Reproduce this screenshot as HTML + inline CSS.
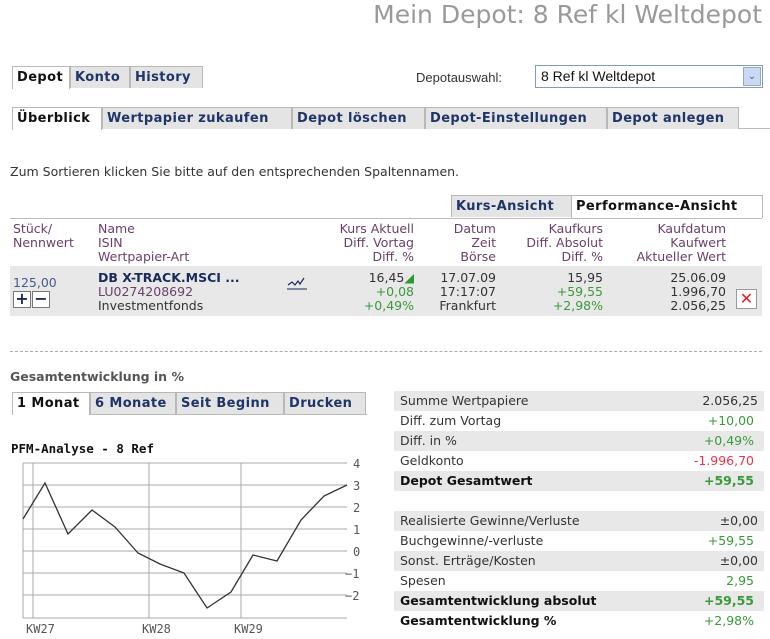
<!DOCTYPE html>
<html><head><meta charset="utf-8"><style>
*{margin:0;padding:0;box-sizing:border-box}
body{width:770px;height:639px;background:#fff;font-family:"DejaVu Sans","Liberation Sans",sans-serif;font-size:12px;color:#333;position:relative;overflow:hidden}
.a{position:absolute;white-space:nowrap}
.tab{position:absolute;height:22px;border:1px solid #b8b8b8;border-bottom:none;background:#e4e4e4;font-weight:bold;color:#1f3568;font-size:13px;line-height:21px;text-align:left;padding-left:4px;overflow:hidden;white-space:nowrap;letter-spacing:0.4px}
.tab.on{background:#fff;color:#111;height:23px}
.line{position:absolute;height:1px;background:#bbb}
.p{color:#6a3f6a}
.g{color:#3a9a3a}
.r{text-align:right}
.row{position:absolute;left:394px;width:370px;height:20px;line-height:20px;font-size:12.5px}
.row span{position:absolute;left:6px}
.row b,.row i{position:absolute;right:6px;font-style:normal}
.gr{background:#e8e8e8}
</style></head><body>
<div class="a" style="right:8px;top:0px;font-size:25px;color:#999">Mein Depot: 8 Ref kl Weltdepot</div>

<div class="line" style="left:12px;top:87px;width:190px"></div>
<div class="tab on" style="left:12px;top:66px;width:58px">Depot</div>
<div class="tab" style="left:70px;top:66px;width:60px">Konto</div>
<div class="tab" style="left:130px;top:66px;width:73px">History</div>
<div class="a" style="left:416px;top:70px;font-family:'Liberation Sans',sans-serif;font-size:13px;color:#333">Depotauswahl:</div>
<div class="a" style="left:535px;top:65px;width:228px;height:23px;border:1px solid #7f9db9;font-family:'Liberation Sans',sans-serif;font-size:14px;line-height:21px;padding-left:5px;color:#111">8 Ref kl Weltdepot
<div style="position:absolute;right:1px;top:1px;width:18px;height:19px;background:#c9d8f5;border:1px solid #9ab;color:#4d6185;font-size:10px;text-align:center;line-height:17px">&#8964;</div></div>

<div class="line" style="left:12px;top:128px;width:758px"></div>
<div class="tab on" style="left:12px;top:107px;width:90px">Überblick</div>
<div class="tab" style="left:102px;top:107px;width:190px">Wertpapier zukaufen</div>
<div class="tab" style="left:292px;top:107px;width:133px">Depot löschen</div>
<div class="tab" style="left:425px;top:107px;width:182px">Depot-Einstellungen</div>
<div class="tab" style="left:607px;top:107px;width:132px">Depot anlegen</div>

<div class="a" style="left:10px;top:164px;font-size:12.5px;color:#333">Zum Sortieren klicken Sie bitte auf den entsprechenden Spaltennamen.</div>

<div class="line" style="left:10px;top:218px;width:752px"></div>
<div class="tab" style="left:451px;top:195px;width:121px">Kurs-Ansicht</div>
<div class="tab on" style="left:571px;top:195px;width:192px">Performance-Ansicht</div>

<div class="a p" style="left:13px;top:222px;line-height:14px;font-size:12.5px">Stück/<br>Nennwert</div>
<div class="a p" style="left:98px;top:222px;line-height:14px;font-size:12.5px">Name<br>ISIN<br>Wertpapier-Art</div>
<div class="a p r" style="right:356px;top:222px;line-height:14px;font-size:12.5px">Kurs Aktuell<br>Diff. Vortag<br>Diff. %</div>
<div class="a p r" style="right:274px;top:222px;line-height:14px;font-size:12.5px">Datum<br>Zeit<br>Börse</div>
<div class="a p r" style="right:167px;top:222px;line-height:14px;font-size:12.5px">Kaufkurs<br>Diff. Absolut<br>Diff. %</div>
<div class="a p r" style="right:44px;top:222px;line-height:14px;font-size:12.5px">Kaufdatum<br>Kaufwert<br>Aktueller Wert</div>

<div class="a" style="left:10px;top:266px;width:752px;height:50px;background:#e8e8e8"></div>
<div class="a" style="left:13px;top:275px;font-size:12.5px;color:#4a5a8a">125,00</div>
<div class="a" style="left:13px;top:291px;width:18px;height:17px;border:1px solid #777;background:#fff;font-weight:bold;font-size:16px;line-height:14px;text-align:center;color:#1a2a5a">+</div>
<div class="a" style="left:32px;top:291px;width:18px;height:17px;border:1px solid #777;background:#fff;font-weight:bold;font-size:16px;line-height:14px;text-align:center;color:#1a2a5a">−</div>
<div class="a" style="left:98px;top:271px;line-height:14px;font-size:12.5px"><b style="color:#1a2a5a">DB X-TRACK.MSCI ...</b><br><span class="p">LU0274208692</span><br>Investmentfonds</div>
<svg class="a" style="left:286px;top:277px" width="22" height="14"><path d="M2 8 L6 5 L9 8 L12 4 L14 7 L18 1" fill="none" stroke="#1a2a5a" stroke-width="1.2"/><line x1="1" y1="12" x2="21" y2="12" stroke="#1a2a5a"/></svg>
<div class="a r" style="right:356px;top:271px;line-height:14px;font-size:12.5px">16,45<span style="color:#2a9a2a">&#9698;</span><br><span class="g">+0,08</span><br><span class="g">+0,49%</span></div>
<div class="a r" style="right:274px;top:271px;line-height:14px;font-size:12.5px">17.07.09<br>17:17:07<br>Frankfurt</div>
<div class="a r" style="right:167px;top:271px;line-height:14px;font-size:12.5px">15,95<br><span class="g">+59,55</span><br><span class="g">+2,98%</span></div>
<div class="a r" style="right:44px;top:271px;line-height:14px;font-size:12.5px">25.06.09<br>1.996,70<br>2.056,25</div>
<div class="a" style="left:736px;top:289px;width:21px;height:20px;border:1px solid #999;background:#fff;color:#e02020;font-size:16px;line-height:18px;text-align:center">✕</div>

<div class="a" style="left:10px;top:351px;width:752px;border-top:1px dashed #aaa"></div>

<div class="a" style="left:10px;top:369px;font-weight:bold;color:#555;font-size:12.5px">Gesamtentwicklung in %</div>
<div class="line" style="left:12px;top:414px;width:355px"></div>
<div class="tab on" style="left:12px;top:392px;width:78px">1 Monat</div>
<div class="tab" style="left:90px;top:392px;width:86px">6 Monate</div>
<div class="tab" style="left:176px;top:392px;width:108px">Seit Beginn</div>
<div class="tab" style="left:284px;top:392px;width:82px">Drucken</div>

<div class="a" style="left:11px;top:441px;font-family:'DejaVu Sans Mono','Liberation Mono',monospace;font-weight:bold;font-size:12.5px;color:#111">PFM-Analyse - 8 Ref</div>
<svg class="a" style="left:0;top:455px" width="380" height="184" font-family="DejaVu Sans Mono,monospace" font-size="12" fill="#555">
<g stroke="#aaa" stroke-width="1">
<line x1="23" y1="8" x2="347" y2="8"/><line x1="23" y1="30" x2="347" y2="30"/><line x1="23" y1="52" x2="347" y2="52"/><line x1="23" y1="74" x2="347" y2="74"/><line x1="23" y1="96" x2="347" y2="96"/><line x1="23" y1="118" x2="347" y2="118"/><line x1="23" y1="140" x2="347" y2="140"/><line x1="23" y1="163" x2="347" y2="163"/>
<line x1="23" y1="8" x2="23" y2="163"/><line x1="33" y1="8" x2="33" y2="163"/><line x1="149" y1="8" x2="149" y2="163"/><line x1="241" y1="8" x2="241" y2="163"/>
</g>
<polyline fill="none" stroke="#333" stroke-width="1.3" points="23,64 45,28 68,79 92,55 115,72 138,98 160,109 184,118 207,153 231,137 253,100 277,106 301,65 324,41 347,30"/>
<text x="353" y="13">4</text><text x="353" y="35">3</text><text x="353" y="57">2</text><text x="353" y="79">1</text><text x="353" y="101">0</text><text x="345" y="123">−1</text><text x="345" y="145">−2</text>
<text x="26" y="178">KW27</text><text x="142" y="178">KW28</text><text x="234" y="178">KW29</text>
</svg>

<div class="row gr" style="top:391px"><span>Summe Wertpapiere</span><i>2.056,25</i></div>
<div class="row" style="top:411px"><span>Diff. zum Vortag</span><i class="g" style="right:10px">+10,00</i></div>
<div class="row gr" style="top:431px"><span>Diff. in %</span><i class="g" style="right:10px">+0,49%</i></div>
<div class="row" style="top:451px"><span>Geldkonto</span><i style="right:10px;color:#f0304a">-1.996,70</i></div>
<div class="row gr" style="top:471px"><span style="font-weight:bold;color:#111">Depot Gesamtwert</span><b class="g" style="right:10px">+59,55</b></div>
<div class="row gr" style="top:511px"><span>Realisierte Gewinne/Verluste</span><i>±0,00</i></div>
<div class="row" style="top:531px"><span>Buchgewinne/-verluste</span><i class="g" style="right:10px">+59,55</i></div>
<div class="row gr" style="top:551px"><span>Sonst. Erträge/Kosten</span><i>±0,00</i></div>
<div class="row" style="top:571px"><span>Spesen</span><i class="g" style="right:10px">2,95</i></div>
<div class="row gr" style="top:591px"><span style="font-weight:bold;color:#111">Gesamtentwicklung absolut</span><b class="g" style="right:10px">+59,55</b></div>
<div class="row" style="top:611px"><span style="font-weight:bold;color:#111">Gesamtentwicklung %</span><i class="g" style="right:10px">+2,98%</i></div>
</body></html>
